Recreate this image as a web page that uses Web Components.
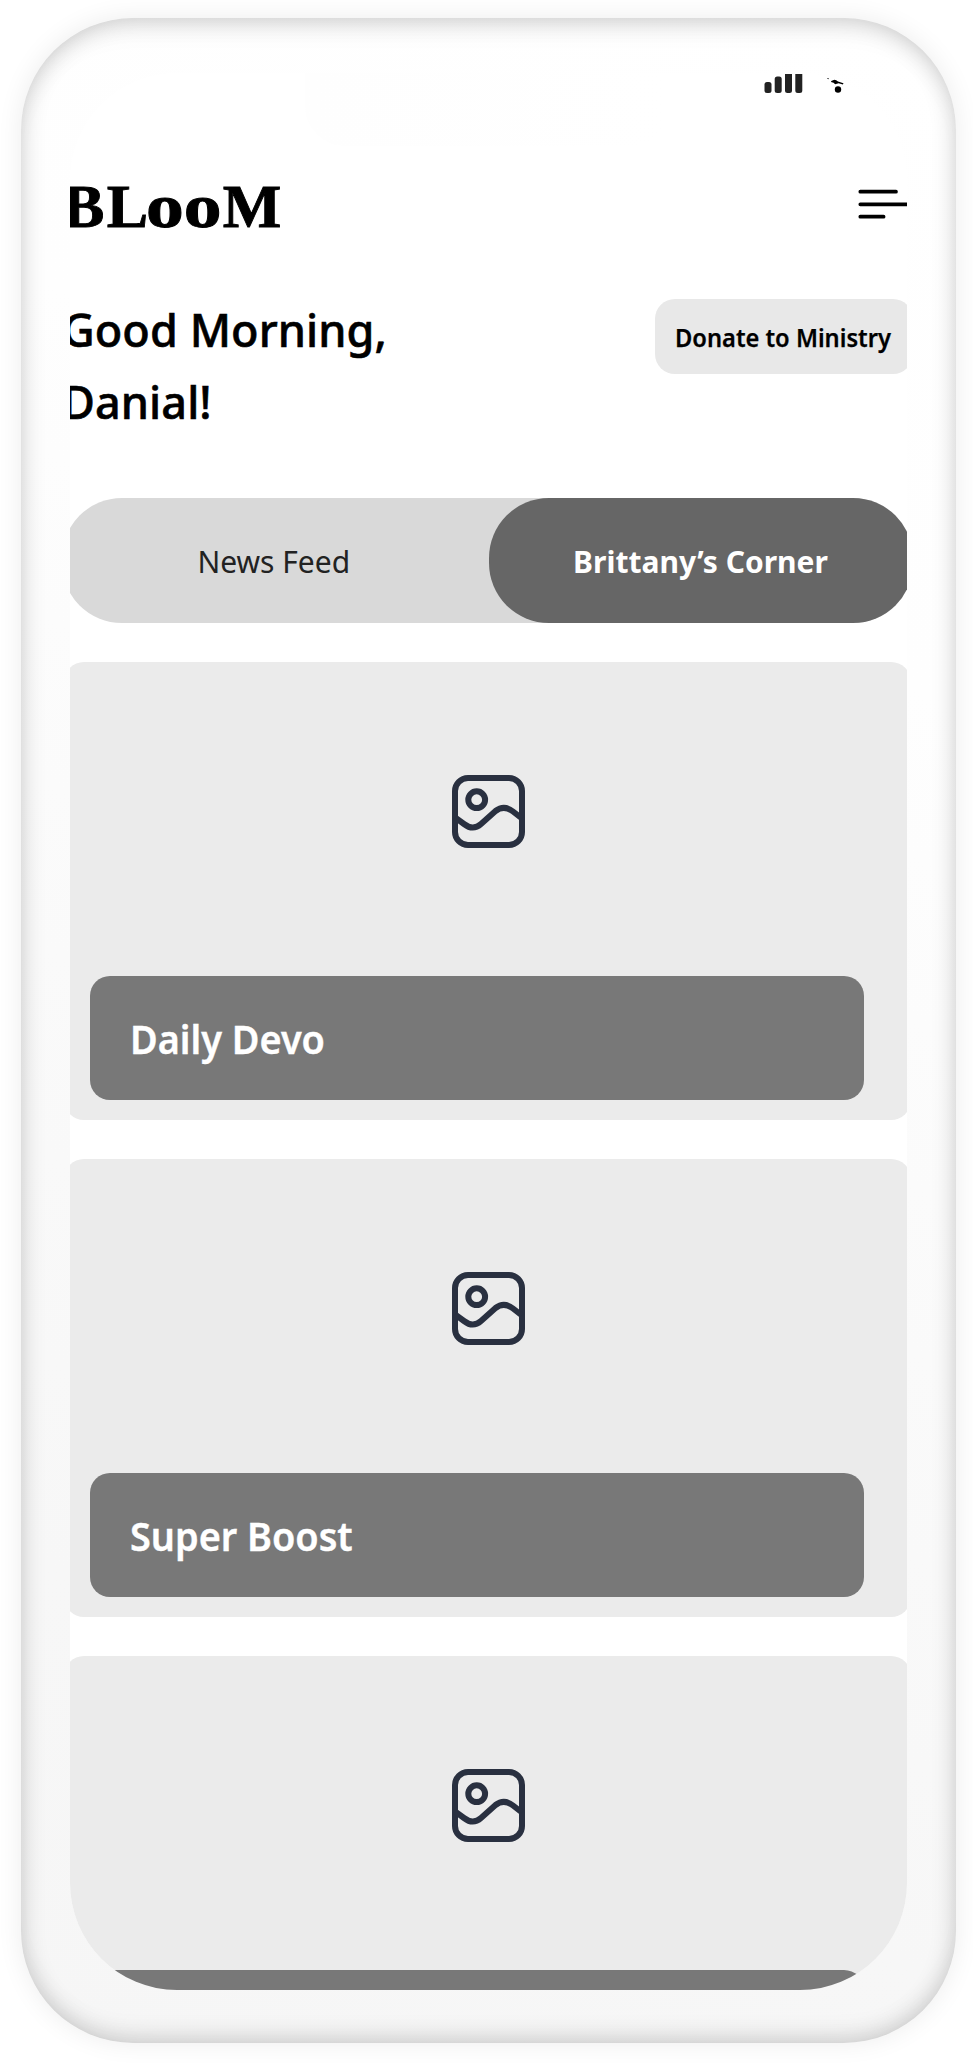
<!DOCTYPE html>
<html lang="en">
<head>
<meta charset="utf-8">
<title>BLooM</title>
<style>
html,body{margin:0;background:#fff}
body{width:973px;height:2063px;overflow:hidden;font-family:"Noto Sans","Open Sans",sans-serif;color:#000}
</style>
</head>
<body>
<phone-frame>
  <status-bar></status-bar>
  <app-header></app-header>
  <greeting-row><span>Good Morning,</span><span>Danial!</span><span slot="action">Donate to Ministry</span></greeting-row>
  <tab-switch><span>News Feed</span><span slot="active">Brittany’s Corner</span></tab-switch>
  <media-card>Daily Devo</media-card>
  <media-card>Super Boost</media-card>
  <media-card></media-card>
</phone-frame>
<script>
const define = (name, html) => customElements.define(name, class extends HTMLElement {
  constructor() {
    super();
    this.attachShadow({ mode: 'open' }).innerHTML = html;
  }
});

define('phone-frame', `
<style>
:host{display:block;padding:18px 17px 20px 21px;box-sizing:border-box;height:2063px}
.body{height:2025px;box-sizing:border-box;padding:55px 49px 53px;border-radius:112px;
  background:linear-gradient(205deg,#fff 0%,#fefefe 28%,#fafafa 55%,#f7f7f7 80%,#f6f6f6 100%);
  box-shadow:0 0 26px rgba(0,0,0,.075),inset 0 0 24px rgba(0,0,0,.2),inset 0 24px 28px -14px rgba(0,0,0,.055),inset 0 -24px 28px -14px rgba(0,0,0,.045)}
.screen{height:1917px;width:837px;border-radius:107px;overflow:hidden;background:#fff}
.page{width:850.5px;margin-left:-8px}
</style>
<div class="body"><div class="screen"><div class="page"><slot></slot></div></div></div>`);

define('status-bar', `
<style>
:host{display:flex;height:73px;align-items:flex-start;justify-content:flex-end;padding-right:65.5px}
.notch{width:366px;height:73px;border-radius:0 0 40px 40px;background:linear-gradient(90deg,#fefefe,#fff);margin-right:88px}
svg{display:block}
</style>
<div class="notch"></div>
<svg width="88" height="24" viewBox="0 0 88 24">
  <g fill="#222"><rect x="5.5" y="9" width="7" height="11" rx="2.5"/><rect x="15.7" y="3.5" width="7" height="16.5" rx="2.5"/>
  <path d="M26 1h7v16.5q0 2.5-2.5 2.5h-2q-2.5 0-2.5-2.5zM36.300 1h7v16.500q0 2.500-2.500 2.500h-2q-2.500 0-2.500-2.500z"/></g>
  <circle cx="79" cy="16.500" r="3.200"/>
  <path d="M72.300 8l3-1.200q2 .4 3.700 1.600l5.500 1.800-.6 1.300-4.300-1.200-3.500 1-1.500-1.600-2.600-.7z"/><path d="M68.300 5l1.600.400v.8l-1.600-.5z"/>
</svg>`);

define('app-header', `
<style>
:host{display:flex;height:153px;box-sizing:border-box;justify-content:space-between;padding:43px 0 0 1px}
h1{margin:-8px 0 0;display:flex;font:700 62px/50px "Liberation Serif",serif;height:50px;-webkit-text-stroke:.9px #000}
h1 span{display:block;transform-origin:0 50%}
.l{margin-left:2.500px}
.o{transform:scaleX(1.22);margin:0 14.500px 0 -2px}
svg{display:block;width:54.500px;height:36px}
</style>
<h1><span>B</span><span class="l">L</span><span class="o">oo</span><span>M</span></h1>
<svg viewBox="0 0 54.500 36" stroke="#000" stroke-width="3.700" stroke-linecap="round"><path d="M2.300 2.700H38M2.300 15.300H54.500M2.300 27.700H25.600"/></svg>`);

define('greeting-row', `
<style>
:host{display:flex;justify-content:space-between;height:199px}
h2{margin:-5px 0 0;display:flex;flex-direction:column;font-size:45px;font-weight:500;line-height:72px;letter-spacing:.08px;-webkit-text-stroke:.6px #000}
.btn{box-sizing:border-box;width:257.500px;height:75px;border-radius:20px;background:#e8e8e8;font-weight:600;font-size:25px;line-height:77px;padding-left:20px;white-space:nowrap}
.btn div{transform:scaleX(.947);transform-origin:0 50%;-webkit-text-stroke:.25px #000}
</style>
<h2><slot></slot></h2><div class="btn"><div><slot name="action"></slot></div></div>`);

define('tab-switch', `
<style>
:host{display:flex;height:125px;border-radius:60px;background:#d9d9d9;margin-bottom:39.300px;font-size:30px;line-height:127px;text-align:center}
div{flex:1;color:#222;padding-right:3px}
.on{flex:none;width:424px;padding:0;background:#666;color:#fff;font-weight:700;border-radius:60px}
</style>
<div><slot></slot></div><div class="on"><slot name="active"></slot></div>`);

define('media-card', `
<style>
:host{display:flex;flex-direction:column;align-items:flex-start;box-sizing:border-box;width:847px;height:457.500px;margin:0 0 39.500px 2px;border-radius:20px;background:#ebebeb;padding:112.700px 0 0 26.300px}
svg{display:block;margin-left:361.700px}
.label{margin-top:127.700px;width:773.500px;height:124.300px;border-radius:20px;background:#787878;color:#fff;font-weight:600;font-size:40px;line-height:125px;box-sizing:border-box;padding-left:40px}
.label div{transform:scaleX(.946);transform-origin:0 50%;-webkit-text-stroke:.4px #fff}
</style>
<svg width="73" height="73" viewBox="0 0 73 73" fill="none" stroke="#293040" stroke-width="6"><rect x="3" y="3" width="67" height="67" rx="13"/><circle cx="24.700" cy="24.700" r="8.400"/><path d="M3 42.300L12 49Q21 56 29 49L43.500 36Q52 29.500 61 36.500L70 43.500"/></svg>
<div class="label"><div><slot></slot></div></div>`);
</script>
</body>
</html>
